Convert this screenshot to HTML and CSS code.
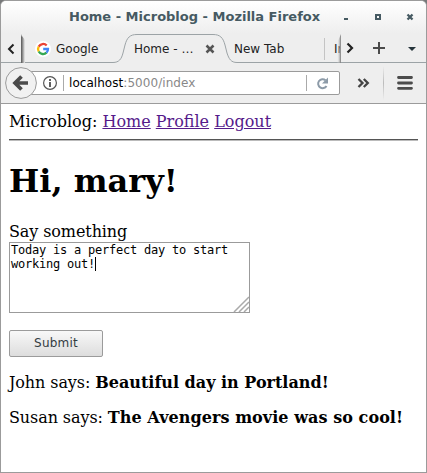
FILE: index.html
```html
<!DOCTYPE html>
<html lang="en">
<head>
<meta charset="utf-8">
<title>Home - Microblog</title>
<link rel="stylesheet" href="styles.css">
</head>
<body>
<div class="window">
  <header class="titlebar">
    <span class="title">Home - Microblog - Mozilla Firefox</span>
    <svg class="controls" width="72" height="12" viewBox="0 0 72 12">
      <path d="M0 7h4v2H0z" fill="#465a62"/>
      <path d="M32 4h4v4h-4z" fill="none" stroke="#465a62" stroke-width="2"/>
      <path d="M63.500 3.500l5 5m0-5l-5 5" stroke="#465a62" stroke-width="2.300"/>
    </svg>
  </header>
  <nav class="tabs">
    <svg class="tabshape" width="427" height="29" viewBox="0 0 427 29">
      <defs>
        <linearGradient id="shade"><stop offset="0" stop-color="#777"/><stop offset="1" stop-color="#eee"/></linearGradient>
        <linearGradient id="shade2"><stop offset="0" stop-color="#eee" stop-opacity="0"/><stop offset="1" stop-color="#777"/></linearGradient>
      </defs>
      <path d="M0 28.500H113C119 28.500 121.500 25 123 19L125 11C127 3.500 130 .5 137 .5H213C220 .5 223 3.500 225 11L227 19C229 25 231 28.500 237 28.500H427" fill="none" stroke="#9ca3a6"/>
      <path d="M21 0l1 3v26h-1z" fill="#666"/>
      <path d="M22 2l3 4v23h-3z" fill="url(#shade)"/>
      <path d="M324.500 4v22" stroke="#c4c4c4"/>
    </svg>
    <svg class="scroll-left" width="8" height="12" viewBox="0 0 8 12"><path d="M6.500 1.500L2 6l4.500 4.500" fill="none" stroke="#222" stroke-width="2"/></svg>
    <div class="tab tab-google">
      <svg width="16" height="16" viewBox="0 0 16 16">
        <circle cx="8" cy="8" r="8" fill="#fff"/>
        <g fill="none" stroke-width="2.300">
          <path d="M11.700 4.500A5 5 0 0 0 3.700 5.600" stroke="#ea4335"/>
          <path d="M3.700 5.600A5 5 0 0 0 3.700 10.500" stroke="#fbbc05"/>
          <path d="M3.700 10.500A5 5 0 0 0 11.500 11.700" stroke="#34a853"/>
          <path d="M11.500 11.700A5 5 0 0 0 13 8H8.200" stroke="#4285f4"/>
        </g>
      </svg>
      <span>Google</span>
    </div>
    <div class="tab tab-home"><span>Home - …</span>
      <svg width="10" height="10" viewBox="0 0 10 10"><path d="M1.500 1.500l7 7m0-7l-7 7" stroke="#555" stroke-width="2.500"/></svg>
    </div>
    <div class="tab tab-new">New Tab</div>
    <div class="tab tab-cut">In</div>
    <svg class="tabtools" width="88" height="29" viewBox="0 0 88 29">
      <path d="M0 9l4-9v29H0z" fill="url(#shade2)"/>
      <path d="M10.500 9.500L15 14l-4.500 4.500" fill="none" stroke="#222" stroke-width="2.200"/>
      <path d="M36 14h12M42 8v12" stroke="#4a4a4a" stroke-width="2"/>
      <path d="M71 13h8l-4 4z" fill="#26343b"/>
    </svg>
  </nav>
  <div class="toolbar">
    <div class="urlbar">
      <svg class="info" width="14" height="14" viewBox="0 0 14 14"><circle cx="7" cy="7" r="6.400" fill="none" stroke="#555" stroke-width="1.200"/><path d="M7 3v2M7 6v5" stroke="#444" stroke-width="1.700"/></svg>
      <i class="rule"></i>
      <span class="url"><b>localhost</b>:5000/index</span>
      <i class="rule rule-right"></i>
      <svg class="reload" width="13" height="13" viewBox="0 0 13 13"><path d="M9.500 3.200A4.500 4.500 0 1 0 10.500 9" fill="none" stroke="#8d9ba8" stroke-width="2"/><path d="M12 .5v6H6z" fill="#8d9ba8"/></svg>
    </div>
    <svg class="back" width="32" height="32" viewBox="0 0 32 32"><circle cx="16" cy="16" r="15.400" fill="#f1f1f1" stroke="#9b9b9b"/><path d="M16.500 9.500L10 16l6.500 6.500M11 16h12" fill="none" stroke="#4b4b4b" stroke-width="3.700"/></svg>
    <svg class="more" width="13" height="10" viewBox="0 0 13 10"><path d="M1.500 1l4 4-4 4M6.800 1l4 4-4 4" fill="none" stroke="#444" stroke-width="2.300"/></svg>
    <i class="separator"></i>
    <svg class="menu" width="16" height="14" viewBox="0 0 16 14"><path d="M1.500 1.500h13M1.500 7h13M1.500 12.300h13" stroke="#4c4c4c" stroke-width="2.800" stroke-linecap="round"/></svg>
  </div>
  <main class="page">
    <div class="nav">Microblog: <a href="#">Home</a> <a href="#">Profile</a> <a href="#">Logout</a></div>
    <hr>
    <h1>Hi, mary!</h1>
    <div class="label">Say something</div>
    <div class="field">Today is a perfect day to start<br>working out!<i class="caret"></i>
      <svg class="grip" width="16" height="16" viewBox="0 0 16 16"><path d="M1 16L16 1M6 16L16 6M11 16l5-5" stroke="#aaa" stroke-width="1.500"/></svg>
    </div>
    <button class="submit">Submit</button>
    <p>John says: <b>Beautiful day in Portland!</b></p>
    <p>Susan says: <b class="wide">The Avengers movie was so cool!</b></p>
  </main>
</div>
</body>
</html>
```
FILE: styles.css
```css
* { box-sizing: border-box; }
body { margin: 0; background: #77797a; font: 12px "DejaVu Sans", sans-serif; color: #222; }
svg { display: block; flex: none; }
.window { width: 427px; height: 473px; border: 1px solid #9b9b9b; border-radius: 6px 6px 0 0; overflow: hidden; background: #eee; display: flex; flex-direction: column; }
.titlebar { flex: none; height: 33px; display: flex; align-items: center; padding-left: 68px; background: linear-gradient(#fff, #eee); }
.title { width: 274px; font-size: 13px; font-weight: bold; line-height: 16px; color: #465a62; white-space: nowrap; }
.controls { margin: -2px 0 0 1px; }
.title { margin-top: -2px; }
.tabs { flex: none; height: 29px; position: relative; display: flex; align-items: center; line-height: 16px; white-space: nowrap; }
.tabshape { position: absolute; left: -1px; top: 0; }
.scroll-left { margin-left: 6px; }
.tab { position: relative; display: flex; align-items: center; height: 17px; }
.tab-google { width: 99px; margin-left: 20px; gap: 5px; }
.tab-home { width: 100px; justify-content: flex-start; }
.tab-home span { width: 71px; }
.tab-new { width: 100px; }
.tab-cut { width: 6px; overflow: hidden; }
.tabtools { position: relative; margin-left: -3px; }
.toolbar { flex: none; height: 41px; position: relative; display: flex; align-items: center; background: #eee; border-bottom: 1px solid #9b9b9b; }
.urlbar { margin-left: 20px; width: 319px; height: 24px; border: 1px solid #9b9b9b; border-radius: 2px; background: #fff; display: flex; align-items: center; padding-left: 21px; }
.rule { width: 1px; height: 16px; background: #aaa; margin-left: 6px; }
.url { margin-left: 5px; width: 237px; color: #888; line-height: 16px; letter-spacing: .05px; }
.url b { font-weight: normal; color: #000; }
.rule-right { margin-left: 0; }
.reload { margin-left: 9px; }
.back { position: absolute; left: 4px; top: 4px; }
.more { margin-left: 17px; }
.separator { width: 1px; height: 34px; margin-left: 13px; background: linear-gradient(#eee, #bbb, #eee); }
.menu { margin-left: 13px; }
.page { flex: 1; background: #fff; padding: 8px; color: #000; font: 16px/19px "DejaVu Serif", serif; white-space: nowrap; }
.page a { color: #551a8b; }
.nav { height: 19px; }
hr { border: 0; height: 2px; margin: 8px 0 0; border-top: 1px solid #555; border-bottom: 1px solid #bbb; }
h1 { margin: 21px 0 22px; font-size: 32px; line-height: 38px; }
.label { height: 20px; letter-spacing: -.1px; }
.field { position: relative; width: 241px; height: 71px; border: 1px solid #9b9b9b; padding: 0 1px; font: 12px/14px "DejaVu Sans Mono", monospace; letter-spacing: -.224px; }
.caret { display: inline-block; width: 1px; height: 14px; background: #000; vertical-align: top; }
.grip { position: absolute; right: 0; bottom: 0; }
.submit { display: block; margin: 17px 0 0; padding: 0 0 2px; width: 94px; height: 27px; border: 1px solid #9b9b9b; border-radius: 2px; background: linear-gradient(#f8f8f8, #ddd); color: #333c42; font: 12px "DejaVu Sans", sans-serif; letter-spacing: .2px; }
p { margin: 16px 0 0; letter-spacing: -.09px; }
p b { letter-spacing: 0; }
p b.wide { letter-spacing: .06px; }
```
